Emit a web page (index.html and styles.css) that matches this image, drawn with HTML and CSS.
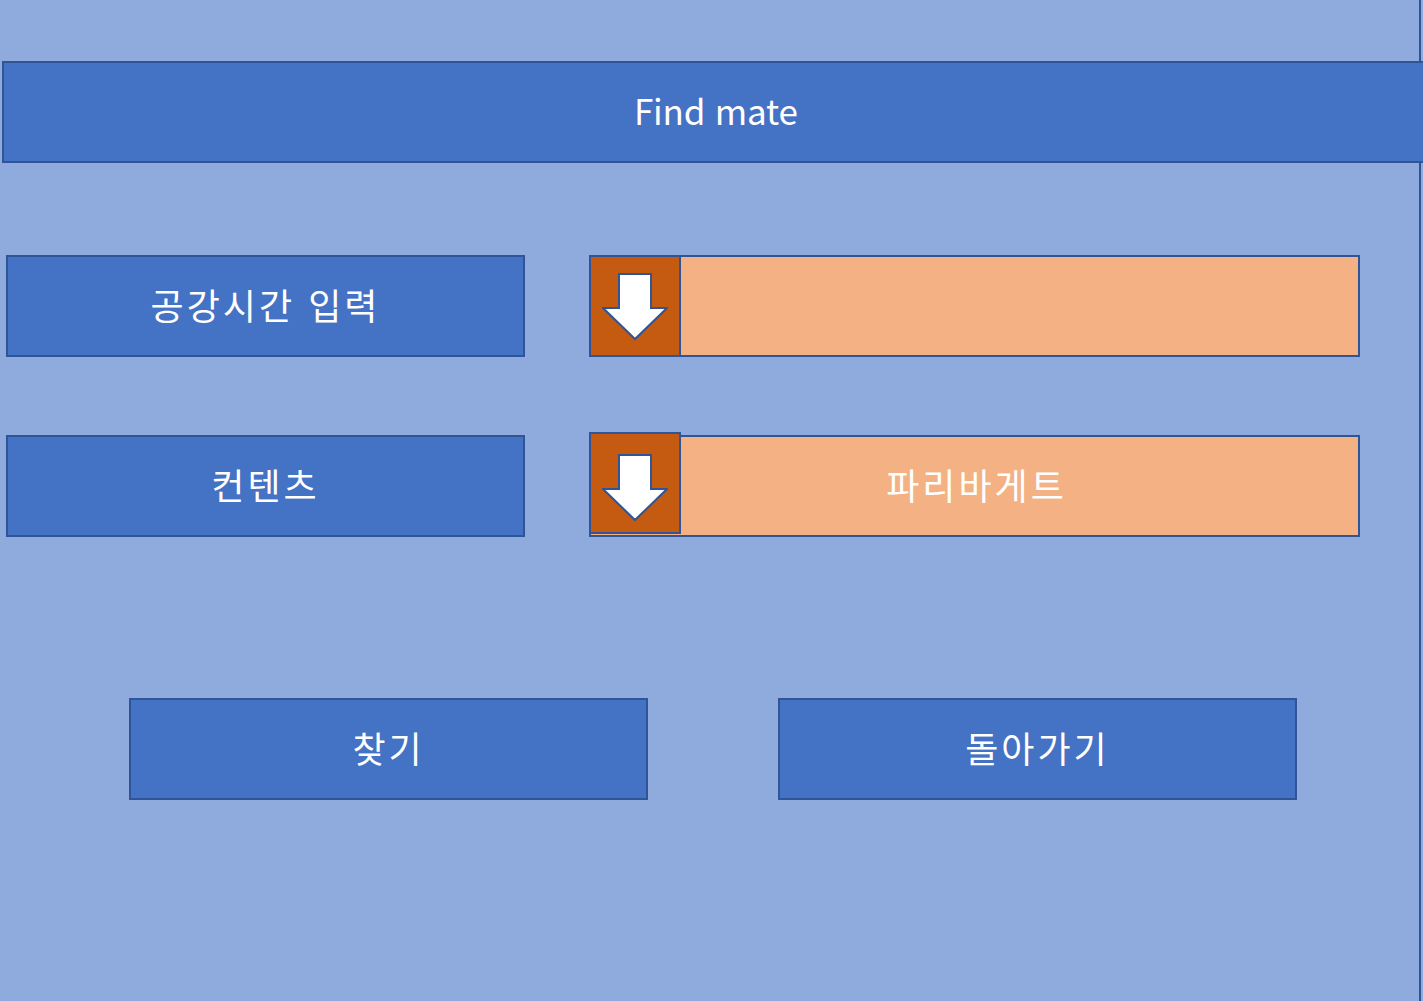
FILE: index.html
```html
<!DOCTYPE html>
<html lang="ko">
<head>
<meta charset="utf-8">
<title>Find mate</title>
<link rel="stylesheet" href="styles.css">
</head>
<body>
<div class="page">
  <header class="header">Find mate</header>
  <div class="row row-first">
    <div class="label">공강시간 입력</div>
    <div class="select">
      <div class="drop">
        <svg width="66" height="68" viewBox="0 0 66 68"><path d="M17 1 H49 V35 H65 L33 66 L1 35 H17 Z" fill="#fff" stroke="#2F5597" stroke-width="2" stroke-linejoin="miter"/></svg>
      </div>
      <div class="value"></div>
    </div>
  </div>
  <div class="row row-second">
    <div class="label">컨텐츠</div>
    <div class="select">
      <div class="drop drop-raised">
        <svg width="66" height="68" viewBox="0 0 66 68"><path d="M17 1 H49 V35 H65 L33 66 L1 35 H17 Z" fill="#fff" stroke="#2F5597" stroke-width="2" stroke-linejoin="miter"/></svg>
      </div>
      <div class="value">파리바게트</div>
    </div>
  </div>
  <div class="actions">
    <button class="btn">찾기</button>
    <button class="btn">돌아가기</button>
  </div>
</div>
</body>
</html>
```
FILE: styles.css
```css
html, body {
  margin: 0;
  padding: 0;
  overflow: hidden;
  background: #8FAADC;
}
body {
  font-family: "Noto Sans CJK KR", "Noto Sans", sans-serif;
  color: #fff;
}
.page {
  width: 1421px;
  height: 1001px;
  border-right: 2px solid #2F5597;
  padding-top: 61px;
  box-sizing: border-box;
}
.header {
  margin-left: 2px;
  width: 1440px;
  height: 102px;
  box-sizing: border-box;
  background: #4472C4;
  border: 2px solid #2F5597;
  display: flex;
  align-items: center;
  justify-content: flex-start;
  padding-left: 630px;
  padding-bottom: 5px;
  font-size: 35px;
  font-weight: 400;
  letter-spacing: -0.2px;
}
.row {
  display: flex;
  align-items: flex-start;
  margin-left: 6px;
}
.row-first { margin-top: 92px; }
.row-second { margin-top: 78px; }
.label {
  width: 519px;
  height: 102px;
  box-sizing: border-box;
  background: #4472C4;
  border: 2px solid #2F5597;
  display: flex;
  align-items: center;
  justify-content: center;
  padding-bottom: 4px;
  font-size: 36px;
  font-weight: 400;
  letter-spacing: 3px;
}
.select {
  margin-left: 64px;
  width: 771px;
  height: 102px;
  box-sizing: border-box;
  background: #F4B183;
  border: 2px solid #2F5597;
  display: flex;
  align-items: stretch;
}
.drop {
  margin: -2px 0 -2px -2px;
  width: 92px;
  box-sizing: border-box;
  background: #C55A11;
  border: 2px solid #2F5597;
  display: flex;
  justify-content: center;
  padding-top: 16px;
  flex: none;
}
.drop-raised {
  margin-top: -5px;
  margin-bottom: 1px;
  padding-top: 20px;
}
.value {
  flex: 1;
  display: flex;
  align-items: center;
  justify-content: center;
  padding-right: 86px;
  padding-bottom: 4px;
  font-size: 36px;
  font-weight: 400;
  letter-spacing: 3px;
}
.actions {
  display: flex;
  margin-top: 161px;
  margin-left: 129px;
  gap: 130px;
}
.btn {
  width: 519px;
  height: 102px;
  box-sizing: border-box;
  background: #4472C4;
  border: 2px solid #2F5597;
  color: #fff;
  font-family: "Noto Sans CJK KR", "Noto Sans", sans-serif;
  font-size: 36px;
  font-weight: 400;
  letter-spacing: 3px;
  padding: 0 0 4px 0;
  display: flex;
  align-items: center;
  justify-content: center;
}
```
